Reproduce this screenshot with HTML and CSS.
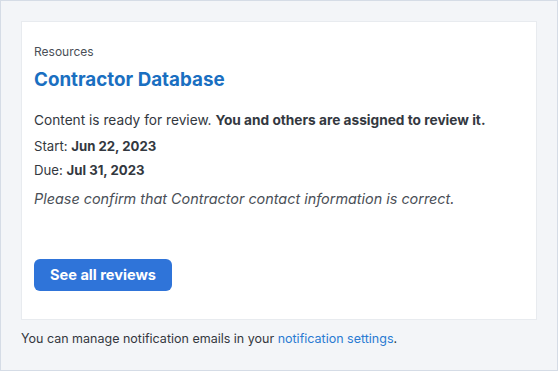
FILE: index.html
```
<!DOCTYPE HTML>
<html>
<head>
<meta charset="utf-8">
<title>Review notification</title>
<link rel="stylesheet" href="styles.css">
</head>

<body>
<div class="frame">
	<div class="card">
		<p class="kicker">Resources</p>
		<h1 class="title">Contractor Database</h1>
		<p class="lead">Content is ready for review. <b>You and others are assigned to review it.</b></p>
		<p class="date">Start: <b>Jun 22, 2023</b></p>
		<p class="date">Due: <b>Jul 31, 2023</b></p>
		<p class="note">Please confirm that Contractor contact information is correct.</p>
		<a class="button" href="#">See all reviews</a>
	</div>
	<p class="footer">You can manage notification emails in your <a href="#">notification settings</a>.</p>
</div>
</body>
</html>
```

FILE: styles.css
```
html, body {
	margin: 0;
	height: 100%;
}

body {
	font-family: Inter, "Noto Sans", sans-serif;
	font-size: 13px;
	color: #333840;
}

.frame {
	box-sizing: border-box;
	height: 100%;
	padding: 20px 20px 0;
	background: #f3f5f8;
	border: 1px solid #d5dce6;
}

.card {
	background: #fff;
	border: 1px solid #e8ebef;
	padding: 21px 12px 28px;
}

.card p {
	margin: 0;
}

.kicker {
	font-size: 12px;
	color: #4a4f57;
	line-height: 18px;
}

.title {
	margin: 6px 0 0;
	font-size: 18.8px;
	line-height: 26px;
	color: #1a6fc1;
}

.lead {
	margin-top: 16px !important;
	font-size: 13.7px;
	line-height: 22px;
}

.date {
	margin-top: 6px !important;
	font-size: 13.2px;
	line-height: 18px;
}

.note {
	margin-top: 9px !important;
	font-size: 14.4px;
	font-style: italic;
	line-height: 22px;
	color: #4a4f57;
}

.button {
	display: inline-block;
	margin-top: 49px;
	padding: 0 16px;
	height: 32px;
	line-height: 32px;
	border-radius: 6px;
	background: #2f74d9;
	color: #fff;
	font-weight: bold;
	font-size: 14.6px;
	text-decoration: none;
}

.footer {
	margin: 10px 0 0;
	line-height: 18px;
	font-size: 12.5px;
}

.footer a {
	color: #2a7ad2;
	text-decoration: none;
}
```
